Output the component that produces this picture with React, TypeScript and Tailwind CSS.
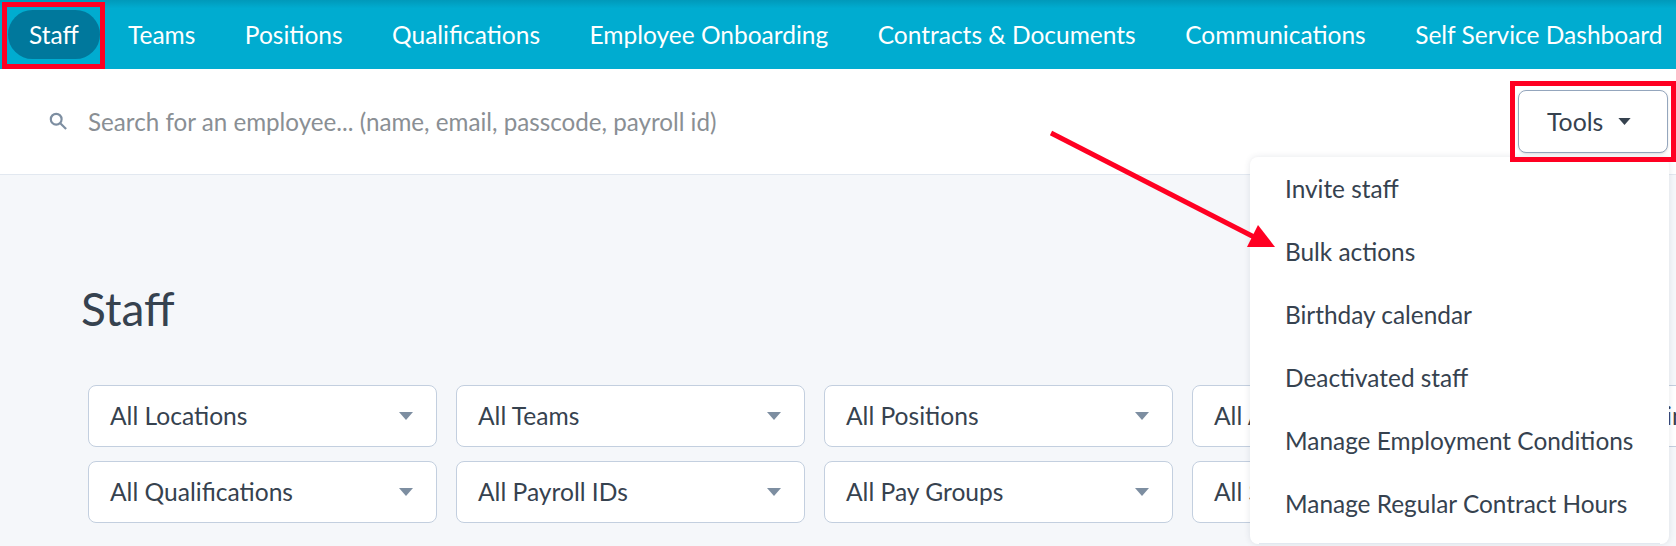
const navItems = ["Teams", "Positions", "Qualifications", "Employee Onboarding", "Contracts & Documents", "Communications", "Self Service Dashboard"];
const menuItems = ["Invite staff", "Bulk actions", "Birthday calendar", "Deactivated staff", "Manage Employment Conditions", "Manage Regular Contract Hours"];
const filterRows = [
  ["All Locations", "All Teams", "All Positions", "All Access Levels", "All Administrators"],
  ["All Qualifications", "All Payroll IDs", "All Pay Groups", "All Statuses"],
];

const Caret = ({ className }: { className: string }) => (
  <svg viewBox="0 0 14 8" className={className} fill="currentColor">
    <path d="M0 0h14L7 8z" />
  </svg>
);

const Filter = ({ label }: { label: string }) => (
  <div className="flex h-[62px] w-[349px] shrink-0 items-center justify-between rounded-lg border border-[#c3cfdf] bg-white pl-[21px] pr-[23px] text-[24.6px] text-[#36424f]">
    <span className="whitespace-nowrap">{label}</span>
    <Caret className="h-[8px] w-[14px] text-[#7d8ea1]" />
  </div>
);

export default function App() {
  return (
    <div className="relative h-[546px] w-[1676px] overflow-hidden bg-[#f5f7fa] font-['Lato',sans-serif]">
      <nav className="flex h-[69px] items-center bg-[#00acd0] bg-gradient-to-b from-[#0099ba] to-[#00acd0] to-[12%] pl-2 text-[24.5px] text-white">
        <a className="flex h-[49px] w-[92px] items-center justify-center rounded-full bg-[#00789c] pt-[1px]">Staff</a>
        <div className="ml-7 flex gap-[49.5px] pt-[1px]">
          {navItems.map((item) => (
            <a key={item} className="whitespace-nowrap">{item}</a>
          ))}
        </div>
      </nav>

      <div className="flex h-[106px] items-center justify-between border-b border-[#e2e8f0] bg-white pl-[49px] pr-2">
        <div className="flex items-center gap-[21px]">
          <svg viewBox="0 0 20 20" className="h-[18px] w-[18px] text-[#7d8ea1]" fill="none" stroke="currentColor" strokeWidth="2.4">
            <circle cx="8" cy="8" r="6" />
            <path d="M12.5 12.5 19 19" />
          </svg>
          <span className="pt-[2px] text-[24.2px] text-[#8a8f94]">Search for an employee... (name, email, passcode, payroll id)</span>
        </div>
        <button className="flex h-[63px] w-[150px] items-center gap-[15px] rounded-lg border border-[#94a6bd] bg-white pl-[28px] text-[24.8px] text-[#36424f] shadow-sm">
          Tools
          <Caret className="h-[7px] w-[13px] text-[#36424f]" />
        </button>
      </div>

      <div className="px-[81px] pt-[100px]">
        <h1 className="text-[46px] leading-[68px] text-[#36424f]">Staff</h1>
        <div className="ml-[7px] mt-[42px] flex flex-col gap-[14px]">
          {filterRows.map((row) => (
            <div key={row[0]} className="flex gap-[19px]">
              {row.map((f) => (
                <Filter key={f} label={f} />
              ))}
            </div>
          ))}
        </div>
      </div>

      <div className="absolute left-[1250px] top-[157px] w-[419px] rounded-lg bg-white pt-[1px] shadow-[0_0_6px_rgba(50,60,80,0.12)]">
        {menuItems.map((item) => (
          <div key={item} className="flex h-[63px] items-center whitespace-nowrap pl-[35px] text-[24.4px] text-[#36424f]">{item}</div>
        ))}
        <div className="mx-[9px] mt-[7px] border-t border-[#e2e8f0]" />
      </div>

      <div className="absolute left-[2px] top-[2px] h-[67px] w-[103px] border-[5px] border-[#ff0022]" />
      <div className="absolute left-[1510px] top-[81px] h-[81px] w-[166px] border-[5px] border-[#ff0022]" />
      <svg className="absolute left-[1040px] top-[125px] h-[130px] w-[240px]" viewBox="0 0 240 130">
        <path d="M11 8 216 113" stroke="#ff0022" strokeWidth="5" />
        <path d="M218 100 235 122 207 122z" fill="#ff0022" />
      </svg>
    </div>
  );
}
